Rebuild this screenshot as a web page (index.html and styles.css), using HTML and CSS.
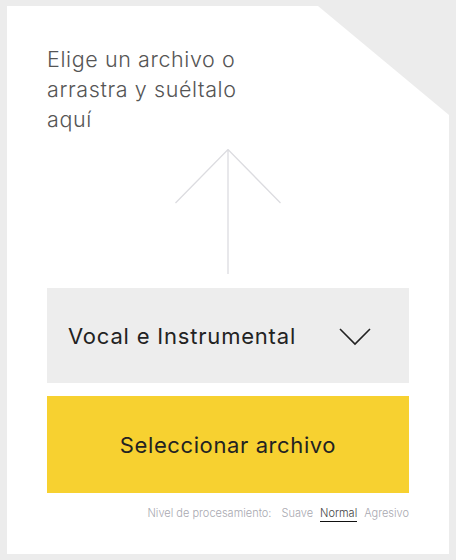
FILE: index.html
```html
<!DOCTYPE html>
<html lang="es">
<head>
<meta charset="utf-8">
<link rel="stylesheet" href="styles.css">
</head>
<body>
<div class="card">
  <p class="prompt">Elige un archivo o<br>arrastra y suéltalo<br>aquí</p>
  <div class="arrow">
    <svg width="106" height="126" viewBox="0 0 106 126">
      <path d="M53 0.5 V125 M0.5 54 L53 0.5 L105.5 54" fill="none" stroke="#dcdce0" stroke-width="1.3"/>
    </svg>
  </div>
  <div class="select">
    <span>Vocal e Instrumental</span>
    <svg width="32" height="18" viewBox="0 0 32 18">
      <path d="M1 1 L16 16 L31 1" fill="none" stroke="#222" stroke-width="1.6"/>
    </svg>
  </div>
  <div class="button">Seleccionar archivo</div>
  <div class="levels">
    <span class="label">Nivel de procesamiento:</span>
    <span class="opt">Suave</span>
    <span class="opt active">Normal</span>
    <span class="opt">Agresivo</span>
  </div>
</div>
</body>
</html>
```
FILE: styles.css
```css
html, body {
  margin: 0;
  padding: 0;
  background: #ececec;
}
body {
  padding: 6px 7px;
  font-family: Inter, "Liberation Sans", sans-serif;
}
.card {
  width: 442px;
  height: 548px;
  box-sizing: border-box;
  background: #fff;
  clip-path: polygon(0 0, 311px 0, 100% 109px, 100% 100%, 0 100%);
  padding: 38px 40px 0 40px;
  display: flex;
  flex-direction: column;
}
.prompt {
  margin: 0;
  font-size: 21.5px;
  line-height: 30px;
  font-weight: 300;
  color: #555;
  letter-spacing: 0.6px;
}
.arrow {
  display: flex;
  justify-content: center;
  margin-top: 15px;
  height: 126px;
}
.select {
  margin-top: 13px;
  height: 95px;
  background: #ededed;
  display: flex;
  align-items: center;
  justify-content: space-between;
  padding: 0 38px 0 21px;
  font-size: 22px;
  letter-spacing: 0.8px;
  color: #222;
}
.select svg {
  margin-top: 2px;
}
.button {
  margin-top: 13px;
  height: 97px;
  background: #f7d130;
  display: flex;
  align-items: center;
  justify-content: center;
  font-size: 22px;
  letter-spacing: 0.6px;
  color: #222;
}
.levels {
  margin-top: 13px;
  display: flex;
  justify-content: flex-end;
  gap: 7px;
  font-size: 11px;
  color: #a8a8b0;
  font-weight: 300;
}
.levels .label {
  margin-right: 3px;
}
.opt.active {
  color: #444;
  border-bottom: 1.5px solid #111;
  padding-bottom: 1px;
}
```
